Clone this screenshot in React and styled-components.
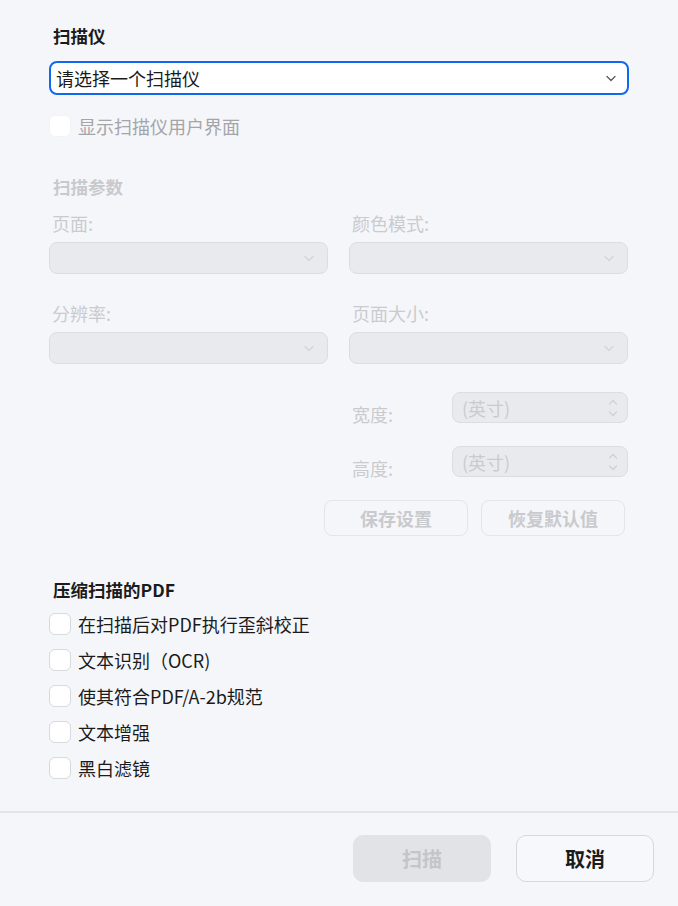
import React from 'react';
import styled, { createGlobalStyle } from 'styled-components';

const GlobalStyle = createGlobalStyle`
  html, body {
    margin: 0;
    padding: 0;
    background: #f5f6fa;
  }
  body {
    font-family: "Noto Sans CJK SC", "Noto Sans", sans-serif;
    color: #1b1b1b;
  }
`;

const Page = styled.div`
  width: 678px;
  height: 906px;
  display: flex;
  flex-direction: column;
  background: #f5f6fa;
  overflow: hidden;
`;

const Body = styled.div`
  flex: 1;
  padding: 24px 49px 0 49px;
  display: flex;
  flex-direction: column;
`;

const SectionTitle = styled.div`
  font-size: 17.5px;
  font-weight: 700;
  line-height: 24px;
  padding-left: 4px;
  color: ${p => (p.disabled ? '#c9c9cc' : '#1b1b1b')};
`;

const MainSelect = styled.div`
  margin-top: 13px;
  height: 34px;
  box-sizing: border-box;
  border: 2px solid #1068ee;
  border-radius: 8px;
  background: #fff;
  display: flex;
  align-items: center;
  justify-content: space-between;
  padding: 0 10px 0 5px;
  font-size: 18px;
  color: #1b1b1b;
`;

const CheckRow = styled.label`
  display: flex;
  align-items: center;
  gap: 7px;
  height: 22px;
  font-size: 18px;
  color: ${p => (p.disabled ? '#a4a5a8' : '#1b1b1b')};
  margin-top: ${p => p.top || 0}px;
`;

const Box = styled.span`
  width: 22px;
  height: 22px;
  box-sizing: border-box;
  border-radius: 6px;
  background: #fff;
  border: 1px solid ${p => (p.disabled ? '#f3f3f5' : '#d8d9dc')};
  flex-shrink: 0;
`;

const Grid = styled.div`
  display: grid;
  grid-template-columns: 279px 279px;
  column-gap: 21px;
  row-gap: 28px;
  margin-top: 13px;
`;

const Field = styled.div`
  display: flex;
  flex-direction: column;
`;

const FieldLabel = styled.div`
  font-size: 18px;
  line-height: 22px;
  color: #cacbce;
  padding-left: 3px;
  margin-bottom: 8px;
`;

const DisabledSelect = styled.div`
  height: 32px;
  box-sizing: border-box;
  border: 1.5px solid #dcdde0;
  border-radius: 8px;
  background: #e9eaed;
  display: flex;
  align-items: center;
  justify-content: flex-end;
  padding-right: 12px;
`;

const SizeRows = styled.div`
  display: flex;
  flex-direction: column;
  gap: 23px;
  margin-top: 28px;
  margin-left: 300px;
`;

const SizeRow = styled.div`
  display: flex;
  align-items: flex-end;
  height: 31px;
`;

const SizeLabel = styled.div`
  width: 100px;
  font-size: 18px;
  color: #cacbce;
  padding-left: 3px;
  line-height: 22px;
  margin-bottom: -2px;
`;

const Spin = styled.div`
  width: 176px;
  height: 31px;
  box-sizing: border-box;
  border: 1.5px solid #dcdde0;
  border-radius: 8px;
  background: #e9eaed;
  display: flex;
  align-items: center;
  justify-content: space-between;
  padding: 0 8px 0 9px;
  font-size: 18px;
  color: #cacbce;
`;

const ActionRow = styled.div`
  display: flex;
  justify-content: flex-end;
  gap: 13px;
  margin-top: 23px;
  margin-right: 4px;
`;

const GhostButton = styled.div`
  width: 144px;
  height: 36px;
  box-sizing: border-box;
  border: 1.5px solid #e4e5e8;
  border-radius: 8px;
  display: flex;
  align-items: center;
  justify-content: center;
  font-size: 18px;
  font-weight: 700;
  color: #c9cacd;
`;

const CheckList = styled.div`
  display: flex;
  flex-direction: column;
  gap: 14px;
  margin-top: 11px;
`;

const Footer = styled.div`
  height: 95px;
  border-top: 2px solid #e3e4e8;
  display: flex;
  justify-content: flex-end;
  align-items: flex-start;
  gap: 25px;
  padding: 22px 24px 0 0;
  box-sizing: border-box;
`;

const FooterButton = styled.div`
  width: 138px;
  height: 47px;
  box-sizing: border-box;
  border-radius: 10px;
  display: flex;
  align-items: center;
  justify-content: center;
  font-size: 20px;
  font-weight: 700;
  background: ${p => (p.primary ? '#e2e3e6' : '#f7f8fb')};
  border: 1.5px solid ${p => (p.primary ? '#e2e3e6' : '#d7d8dc')};
  color: ${p => (p.primary ? '#c4c5c8' : '#1b1b1b')};
`;

const Chevron = ({ color = '#555', size = 12 }) => (
  <svg width={size} height={size} viewBox="0 0 12 12" fill="none">
    <path d="M2 4.5 L6 8.5 L10 4.5" stroke={color} strokeWidth="1.3" strokeLinecap="round" strokeLinejoin="round" />
  </svg>
);

const SpinArrows = () => (
  <svg width="12" height="22" viewBox="0 0 12 22" fill="none">
    <path d="M2.5 7 L6 3.5 L9.5 7" stroke="#cfd0d3" strokeWidth="1.2" strokeLinecap="round" strokeLinejoin="round" />
    <path d="M2.5 15 L6 18.5 L9.5 15" stroke="#cfd0d3" strokeWidth="1.2" strokeLinecap="round" strokeLinejoin="round" />
  </svg>
);

const pdfOptions = [
  '在扫描后对PDF执行歪斜校正',
  '文本识别（OCR)',
  '使其符合PDF/A-2b规范',
  '文本增强',
  '黑白滤镜',
];

export default function App() {
  return (
    <>
      <GlobalStyle />
      <Page>
        <Body>
          <SectionTitle>扫描仪</SectionTitle>
          <MainSelect>
            <span>请选择一个扫描仪</span>
            <Chevron color="#5a5a5a" />
          </MainSelect>
          <CheckRow disabled top={20}>
            <Box disabled />
            显示扫描仪用户界面
          </CheckRow>

          <div style={{ height: 38 }} />
          <SectionTitle disabled>扫描参数</SectionTitle>
          <Grid>
            <Field>
              <FieldLabel>页面:</FieldLabel>
              <DisabledSelect><Chevron color="#d3d4d7" /></DisabledSelect>
            </Field>
            <Field>
              <FieldLabel>颜色模式:</FieldLabel>
              <DisabledSelect><Chevron color="#d3d4d7" /></DisabledSelect>
            </Field>
            <Field>
              <FieldLabel>分辨率:</FieldLabel>
              <DisabledSelect><Chevron color="#d3d4d7" /></DisabledSelect>
            </Field>
            <Field>
              <FieldLabel>页面大小:</FieldLabel>
              <DisabledSelect><Chevron color="#d3d4d7" /></DisabledSelect>
            </Field>
          </Grid>

          <SizeRows>
            <SizeRow>
              <SizeLabel>宽度:</SizeLabel>
              <Spin><span>(英寸)</span><SpinArrows /></Spin>
            </SizeRow>
            <SizeRow>
              <SizeLabel>高度:</SizeLabel>
              <Spin><span>(英寸)</span><SpinArrows /></Spin>
            </SizeRow>
          </SizeRows>

          <ActionRow>
            <GhostButton>保存设置</GhostButton>
            <GhostButton>恢复默认值</GhostButton>
          </ActionRow>

          <div style={{ height: 42 }} />
          <SectionTitle>压缩扫描的PDF</SectionTitle>
          <CheckList>
            {pdfOptions.map(label => (
              <CheckRow key={label}>
                <Box />
                {label}
              </CheckRow>
            ))}
          </CheckList>
        </Body>
        <Footer>
          <FooterButton primary>扫描</FooterButton>
          <FooterButton>取消</FooterButton>
        </Footer>
      </Page>
    </>
  );
}
